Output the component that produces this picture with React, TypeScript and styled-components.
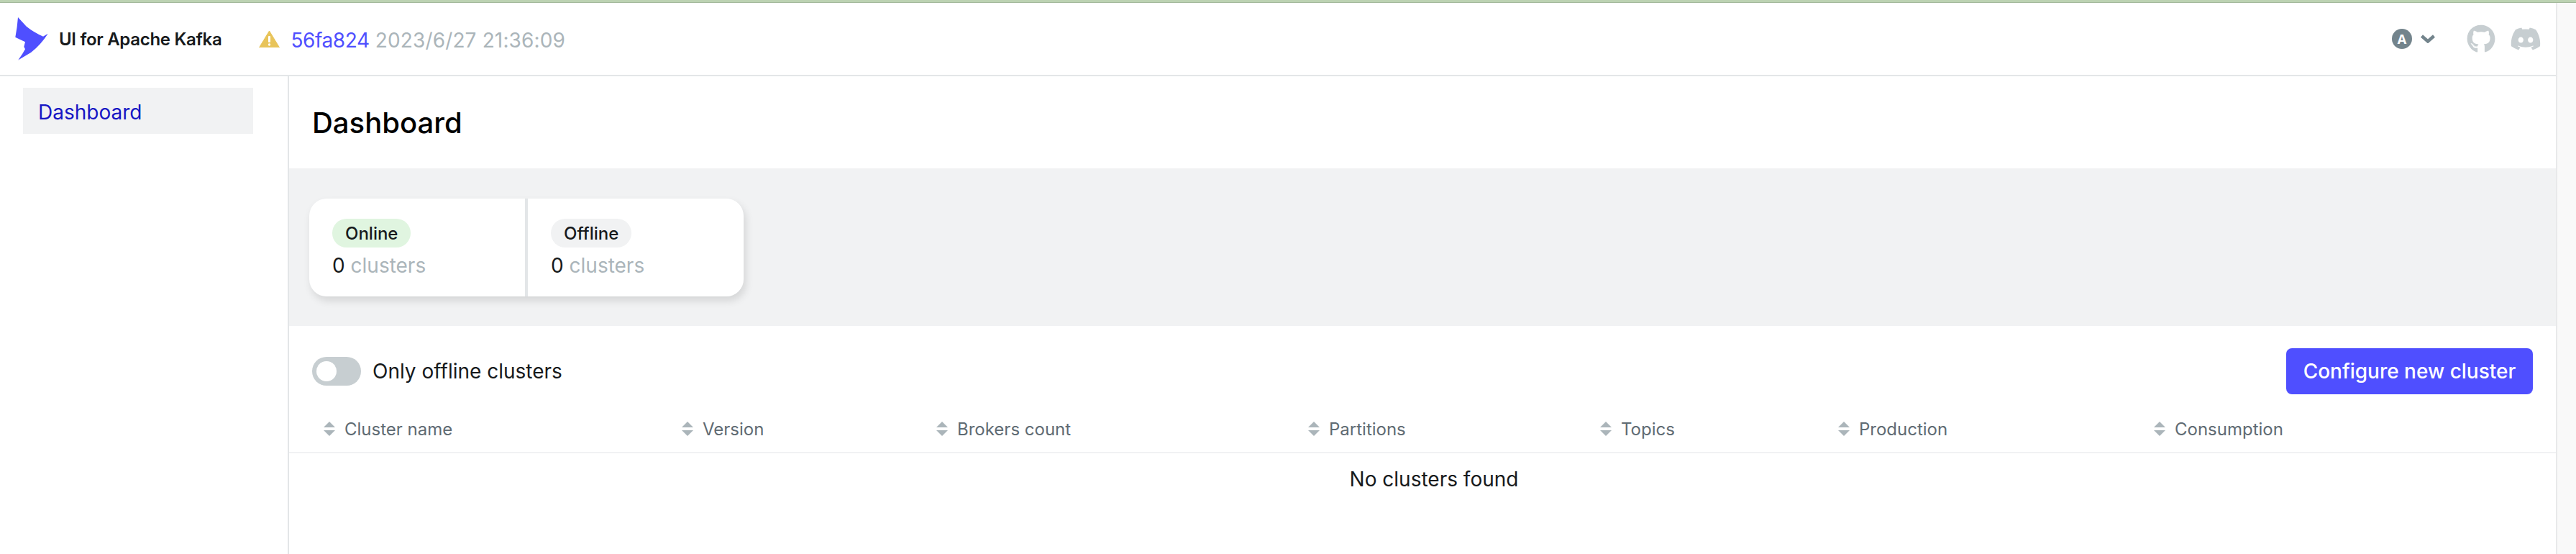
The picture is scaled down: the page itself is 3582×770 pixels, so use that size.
import React from "react";
import styled, { createGlobalStyle } from "styled-components";
import { FaDiscord, FaGithub } from "react-icons/fa";

const Global = createGlobalStyle`
  html, body { margin: 0; padding: 0; background: #fff; }
  body { font-family: Inter, "Liberation Sans", sans-serif; color: #171a1c; overflow: hidden; }
  * { box-sizing: border-box; }
`;

const Page = styled.div`
  display: flex;
  flex-direction: column;
  height: 770px;
  overflow: hidden;
`;
const TopLine = styled.div`
  height: 4px;
  flex: none;
  background: #bcd2b2;
  border-bottom: 1px solid #a3b89b;
`;
const Body = styled.div`
  display: flex;
  flex: 1;
  min-height: 0;
`;
const Content = styled.div`
  display: flex;
  flex-direction: column;
  flex: 1;
  min-width: 0;
`;
const ScrollTrack = styled.div`
  width: 28px;
  flex: none;
  background: #f9f9f9;
  border-left: 2px solid #e8e9ea;
`;
const Header = styled.header`
  height: 102px;
  flex: none;
  display: flex;
  align-items: center;
  justify-content: space-between;
  border-bottom: 2px solid #e3e6e8;
  padding: 0 20px 0 21px;
`;
const HeaderLeft = styled.div`
  display: flex;
  align-items: center;
`;
const Brand = styled.span`
  margin-left: 15px;
  font-size: 24px;
  font-weight: 600;
  letter-spacing: -0.3px;
  color: #171a1c;
`;
const Warn = styled.svg`
  width: 29px;
  height: 24px;
  margin: 0 15px 0 52px;
  flex: none;
`;
const Commit = styled.span`
  font-size: 28px;
  letter-spacing: -0.4px;
  color: #4f4fff;
  padding-top: 3px;
`;
const CommitDate = styled.span`
  font-size: 28px;
  letter-spacing: 0.15px;
  color: #abb5ba;
  margin-left: 8px;
  padding-top: 3px;
`;
const HeaderRight = styled.div`
  display: flex;
  align-items: center;
`;
const Avatar = styled.span`
  width: 28px;
  height: 28px;
  border-radius: 50%;
  background: #73848c;
  color: #fff;
  font-size: 18px;
  font-weight: 700;
  display: flex;
  align-items: center;
  justify-content: center;
`;
const Chevron = styled.svg`
  width: 20px;
  height: 12px;
  margin: 0 44px 0 12px;
`;
const Github = styled(FaGithub)`
  width: 40px;
  height: 40px;
  color: #c7ced1;
`;
const Discord = styled(FaDiscord)`
  width: 44px;
  height: 44px;
  margin-left: 20px;
  color: #c7ced1;
`;
const Shell = styled.div`
  display: flex;
  flex: 1;
  min-height: 0;
`;
const Sidebar = styled.nav`
  width: 402px;
  flex: none;
  padding: 16px 48px 0 32px;
  border-right: 2px solid #e3e6e8;
`;
const NavItem = styled.div`
  height: 64px;
  padding: 4px 0 0 21px;
  display: flex;
  align-items: center;
  font-size: 28px;
  color: #1717c4;
  background: #f1f2f3;
`;
const Main = styled.main`
  flex: 1;
  min-width: 0;
  display: flex;
  flex-direction: column;
`;
const TitleRow = styled.div`
  height: 128px;
  flex: none;
  display: flex;
  align-items: center;
  padding-left: 32px;
`;
const Title = styled.h1`
  margin: 0;
  font-size: 40px;
  font-weight: 450;
  color: #000;
`;
const Band = styled.section`
  height: 219px;
  flex: none;
  padding: 42px 28px;
  background: #f1f2f3;
`;
const Cards = styled.div`
  width: 604px;
  height: 136px;
  display: flex;
  gap: 4px;
  background: #e3e6e8;
  border-radius: 24px;
  box-shadow: 3px 6px 12px rgba(0, 0, 0, 0.12);
  overflow: hidden;
`;
const Card = styled.div`
  width: 300px;
  padding: 28px 32px;
  background: #fff;
`;
const Badge = styled.span<{ $online?: boolean }>`
  display: inline-flex;
  align-items: center;
  height: 40px;
  padding: 0 18px;
  border-radius: 20px;
  font-size: 24px;
  font-weight: 500;
  background: ${(p) => (p.$online ? "#e0f5e0" : "#f1f2f3")};
  color: #171a1c;
`;
const Count = styled.div`
  margin-top: 5px;
  font-size: 28px;
  line-height: 40px;
`;
const Muted = styled.span`
  color: #abb5ba;
`;
const ControlRow = styled.div`
  height: 126px;
  flex: none;
  padding: 31px 32px 0 32px;
  display: flex;
  justify-content: space-between;
  align-items: flex-start;
`;
const ToggleWrap = styled.label`
  display: flex;
  align-items: center;
  height: 64px;
  gap: 16px;
  font-size: 28px;
`;
const Track = styled.span`
  width: 68px;
  height: 40px;
  border-radius: 20px;
  background: #c7ced1;
  padding: 6px;
  display: block;
`;
const Knob = styled.span`
  width: 28px;
  height: 28px;
  border-radius: 50%;
  background: #fff;
  display: block;
`;
const Button = styled.button`
  width: 343px;
  height: 64px;
  border: 0;
  border-radius: 8px;
  background: #4f4fff;
  color: #fff;
  font: 500 28px Inter, "Liberation Sans", sans-serif;
`;
const HeadRow = styled.div`
  height: 51px;
  flex: none;
  display: grid;
  grid-template-columns: 498px 354px 517px 406px 331px 439px 1fr;
  padding: 0 0 15px 48px;
  align-items: center;
  border-bottom: 2px solid #f1f2f3;
`;
const HeadCell = styled.div`
  display: flex;
  align-items: center;
  gap: 13px;
  font-size: 24px;
  color: #5f6b73;
`;
const SortIcon = styled.svg`
  width: 16px;
  height: 20px;
  flex: none;
`;
const Empty = styled.div`
  text-align: center;
  font-size: 28px;
  line-height: 40px;
  padding: 16px 0 0 32px;
`;

const columns = ["Cluster name", "Version", "Brokers count", "Partitions", "Topics", "Production", "Consumption"];

export default function App() {
  return (
    <Page>
      <Global />
      <TopLine />
      <Body>
        <Content>
          <Header>
            <HeaderLeft>
              <svg width="46" height="60" viewBox="21 24 46 60">
                <path
                  d="M25 24 L36.7 36.7 Q47 45 60 50.7 L66.7 46.7 Q57 62 43 73 L25.3 83.5 L31.7 74 L35 68.3 L33.3 65 L35 58.3 L28 55 L21.3 51.7 Q24 38 25 24 Z"
                  fill="#4f4fff"
                />
              </svg>
              <Brand>UI for Apache Kafka</Brand>
              <Warn viewBox="0 0 29 24">
                <path d="M14.5 1 L28.5 24 L0.5 24 Z" fill="#e8c45a" stroke="#e8c45a" strokeLinejoin="round" />
                <rect x="13" y="8" width="3" height="9" rx="1" fill="#fff" />
                <circle cx="14.5" cy="20" r="1.7" fill="#fff" />
              </Warn>
              <Commit>56fa824</Commit>
              <CommitDate>2023/6/27 21:36:09</CommitDate>
            </HeaderLeft>
            <HeaderRight>
              <Avatar>A</Avatar>
              <Chevron viewBox="0 0 20 12">
                <path d="M1.5 2 L10 9.5 L18.5 2" fill="none" stroke="#73848c" strokeWidth="4.5" />
              </Chevron>
              <Github />
              <Discord />
            </HeaderRight>
          </Header>
          <Shell>
            <Sidebar>
              <NavItem>Dashboard</NavItem>
            </Sidebar>
            <Main>
              <TitleRow>
                <Title>Dashboard</Title>
              </TitleRow>
              <Band>
                <Cards>
                  <Card>
                    <Badge $online>Online</Badge>
                    <Count>
                      0 <Muted>clusters</Muted>
                    </Count>
                  </Card>
                  <Card>
                    <Badge>Offline</Badge>
                    <Count>
                      0 <Muted>clusters</Muted>
                    </Count>
                  </Card>
                </Cards>
              </Band>
              <ControlRow>
                <ToggleWrap>
                  <Track>
                    <Knob />
                  </Track>
                  Only offline clusters
                </ToggleWrap>
                <Button>Configure new cluster</Button>
              </ControlRow>
              <HeadRow>
                {columns.map((c) => (
                  <HeadCell key={c}>
                    <SortIcon viewBox="0 0 16 20">
                      <path d="M8 0 L16 8 L0 8 Z M8 20 L16 12 L0 12 Z" fill="#abb5ba" />
                    </SortIcon>
                    {c}
                  </HeadCell>
                ))}
              </HeadRow>
              <Empty>No clusters found</Empty>
            </Main>
          </Shell>
        </Content>
        <ScrollTrack />
      </Body>
    </Page>
  );
}
